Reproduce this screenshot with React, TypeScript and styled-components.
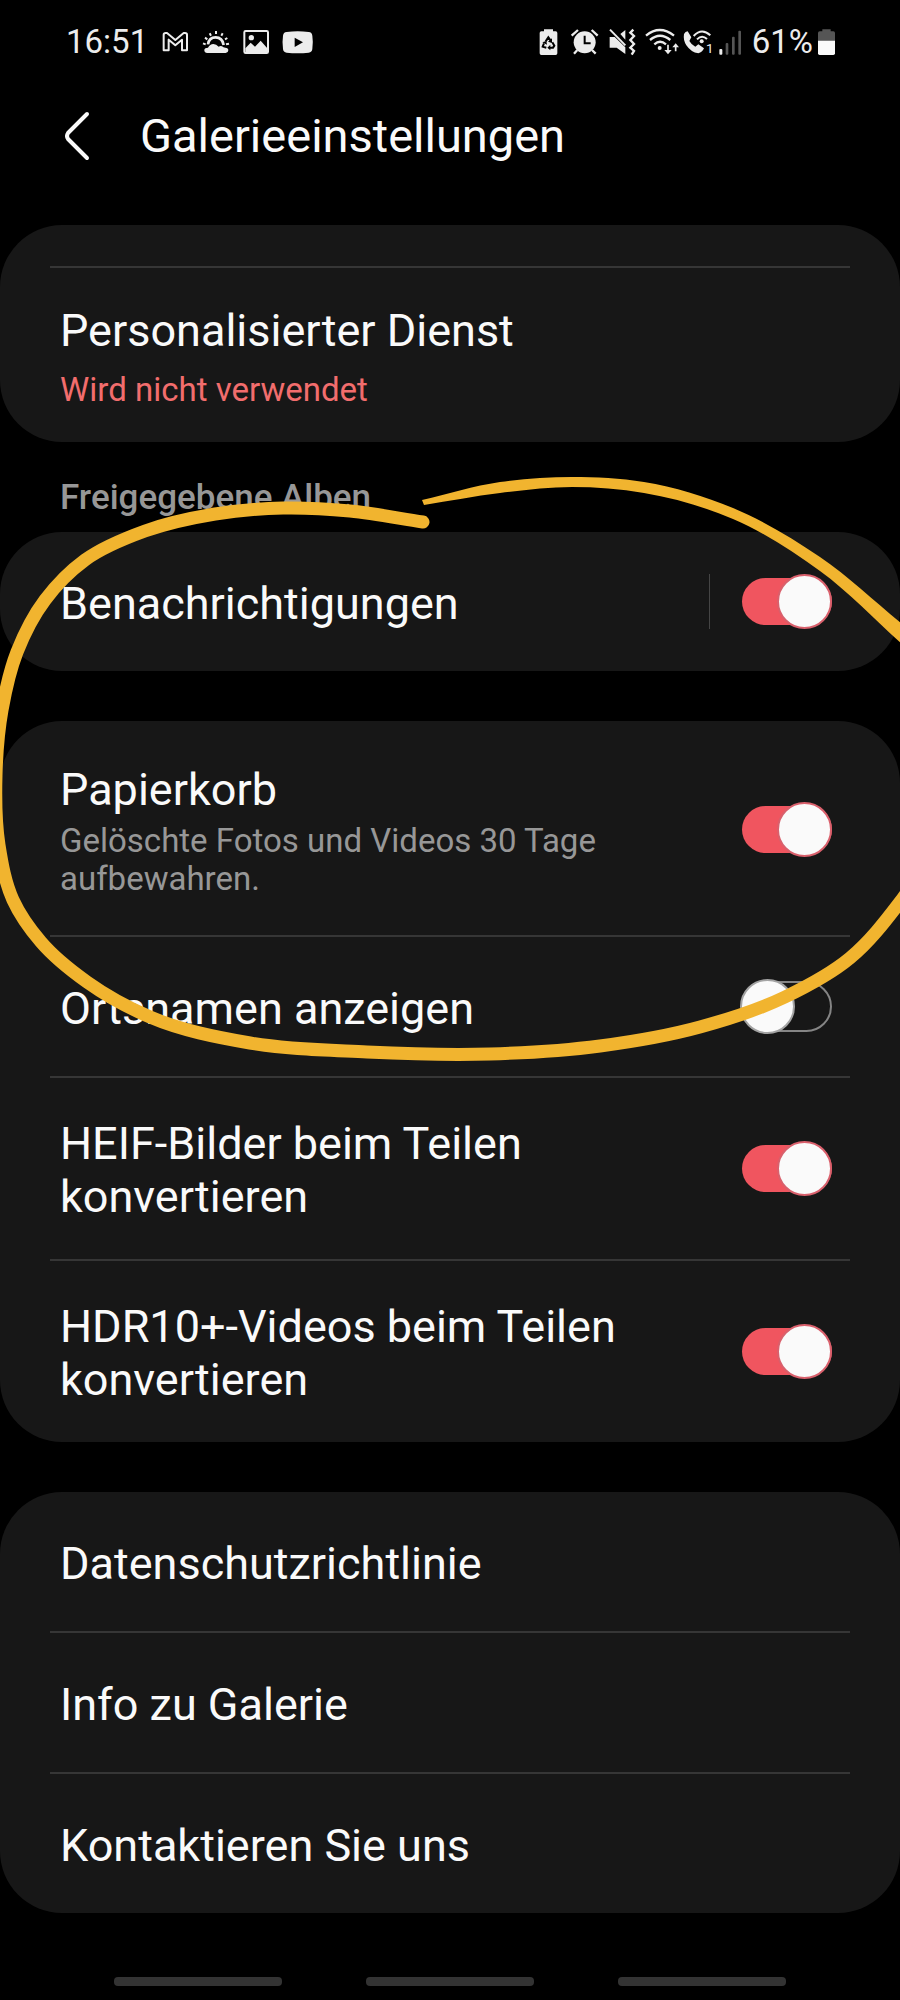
import React, { useId, useState } from "react";
import styled, { createGlobalStyle } from "styled-components";

const GlobalStyle = createGlobalStyle`
  *, *::before, *::after { box-sizing: border-box; }
  body {
    margin: 0;
    background: #000;
    color: #fafafa;
    font-family: Roboto, "Liberation Sans", sans-serif;
  }
  button { font: inherit; color: inherit; background: none; border: 0; padding: 0; }
`;

const Page = styled.div`
  position: relative;
  min-height: 100vh;
  display: flex;
  flex-direction: column;
  overflow: hidden;
`;

const StatusBar = styled.div`
  display: flex;
  justify-content: space-between;
  align-items: center;
  height: 84px;
  padding: 0 61px 0 66px;
  color: #ececec;
  font-size: 33px;
  line-height: 40px;
`;

const StatusGroup = styled.div`
  display: flex;
  align-items: center;
`;

const Clock = styled.span`
  margin-right: 7px;
`;

const Percent = styled.span`
  margin-left: 5px;
`;

const Glyph = styled.svg`
  display: block;
  flex: none;
  height: 30px;
`;

const Header = styled.header`
  display: flex;
  align-items: center;
  height: 141px;
  padding: 0 60px 38px 57px;
`;

const BackButton = styled.button`
  display: flex;
  justify-content: center;
  width: 40px;
  margin-right: 43px;
`;

const Title = styled.h1`
  margin: 0;
  font-size: 47px;
  line-height: 56px;
  font-weight: 400;
`;

const Card = styled.section<{ $clipped?: boolean }>`
  margin-top: ${(p) => (p.$clipped ? 0 : 50)}px;
  padding-top: ${(p) => (p.$clipped ? 41 : 0)}px;
  border-radius: 62px;
  background: #171717;
`;

const GroupHeading = styled.h2`
  margin: 0 60px -50px;
  padding: 36px 0 14px;
  font-size: 35px;
  line-height: 40px;
  font-weight: 500;
  color: #979797;
`;

const Divider = styled.hr`
  height: 2px;
  margin: 0 50px;
  border: 0;
  background: #363636;
`;

const rowPadding = {
  plain: "36px 68px 36px 60px",
  summary: "39px 68px 37px 60px",
  status: "33px 68px 33px 60px",
};

const RowBase = styled.div<{ $kind?: keyof typeof rowPadding }>`
  && {
    display: flex;
    align-items: center;
    width: 100%;
    min-height: 139px;
    padding: ${(p) => rowPadding[p.$kind ?? "plain"]};
    text-align: left;
  }
`;

const RowText = styled.div<{ $gap?: number }>`
  flex: 1;
  display: flex;
  flex-direction: column;
  gap: ${(p) => p.$gap ?? 6}px;
  padding: 3px 80px 0 0;
`;

const RowTitle = styled.span`
  font-size: 45px;
  line-height: 53px;
`;

const Summary = styled.span<{ $accent?: boolean }>`
  font-size: 33px;
  line-height: 38px;
  color: ${(p) => (p.$accent ? "#f26d6d" : "#979797")};
`;

const SwitchDivider = styled.span`
  width: 1px;
  height: 55px;
  margin-right: 30px;
  background: #454545;
`;

const Switch = styled.input`
  appearance: none;
  position: relative;
  flex: none;
  width: 92px;
  height: 55px;
  margin: 0;

  &::before {
    content: "";
    position: absolute;
    top: 2px;
    bottom: 2px;
    left: 2px;
    right: 0;
    border: 2px solid #858585;
    border-radius: 26px;
  }
  &::after {
    content: "";
    position: absolute;
    top: 0;
    left: 0;
    width: 55px;
    height: 55px;
    border: 2px solid #a3a3a3;
    border-radius: 50%;
    background: #fafafa;
  }
  &:checked::before {
    top: 4px;
    bottom: 4px;
    border: 0;
    background: #f0555f;
  }
  &:checked::after {
    left: auto;
    right: 0;
    border-color: #d9606c;
  }
`;

const NavBar = styled.nav`
  display: flex;
  gap: 84px;
  margin-top: auto;
  padding: 62px 114px 14px;
`;

const NavHandle = styled.button`
  flex: 1;
  height: 9px;
  border-radius: 4px;
  background: #333;
`;

const Annotation = styled.svg`
  position: absolute;
  top: 470px;
  left: 0;
  width: 100%;
  height: 600px;
  pointer-events: none;
`;

type Point = [number, number];

/* Unit tangent at point i, taken from its neighbours weighted by distance. */
function tangent(points: Point[], i: number): Point {
  const a = points[Math.max(i - 1, 0)];
  const p = points[i];
  const b = points[Math.min(i + 1, points.length - 1)];
  const before = Math.hypot(p[0] - a[0], p[1] - a[1]) || 1;
  const after = Math.hypot(b[0] - p[0], b[1] - p[1]) || 1;
  const x = ((p[0] - a[0]) / before) * after + ((b[0] - p[0]) / after) * before;
  const y = ((p[1] - a[1]) / before) * after + ((b[1] - p[1]) / after) * before;
  const length = Math.hypot(x, y) || 1;
  return [x / length, y / length];
}

/* Smooth cubic curve through the given points. */
function curve(points: Point[], start = "M"): string {
  let d = `${start}${points[0].join(" ")}`;
  for (let i = 0; i < points.length - 1; i++) {
    const p = points[i];
    const q = points[i + 1];
    const reach = Math.hypot(q[0] - p[0], q[1] - p[1]) / 3;
    const t = tangent(points, i);
    const u = tangent(points, i + 1);
    d += `C${p[0] + t[0] * reach} ${p[1] + t[1] * reach} ${q[0] - u[0] * reach} ${q[1] - u[1] * reach} ${q.join(" ")}`;
  }
  return d;
}

const strokeTop: Point[] = [
  [422, 500], [500, 482], [572, 477], [644, 482], [733, 508], [820, 557],
  [902, 624],
];
const strokeBottom: Point[] = [
  [902, 644], [820, 571], [733, 519], [644, 493], [572, 487], [500, 493],
  [424, 505],
];
const loop: Point[] = [
  [423, 522], [350, 511], [283, 508], [215, 514], [145, 531], [85, 560],
  [45, 600], [17, 652], [2, 710], [-4, 775], [-1, 845], [13, 900],
  [41, 942], [87, 982], [150, 1017], [250, 1043], [367, 1052], [490, 1054],
  [600, 1046], [700, 1027], [785, 997], [850, 958], [900, 902], [945, 830],
];

function HandDrawnCircle() {
  return (
    <Annotation viewBox="0 470 900 600" preserveAspectRatio="none" aria-hidden="true">
      <path d={`${curve(strokeTop)}${curve(strokeBottom, "L")}Z`} fill="#f1b42f" />
      <path d={curve(loop)} fill="none" stroke="#f1b42f" strokeWidth="13" strokeLinecap="round" />
    </Annotation>
  );
}

function NotificationIcons() {
  return (
    <>
      <Glyph width="40" viewBox="315 45 120 90" fill="none" stroke="currentColor" strokeWidth="6" strokeLinejoin="round">
        <path d="M341 115V68Q341 63 347 63H351L376 84L401 63H405Q411 63 411 68V115H396V83L376 100L356 83V115Z" />
      </Glyph>
      <Glyph width="40" viewBox="435 45 120 90" fill="currentColor">
        <path d="M472 123Q462 122 463 113Q464 107 474 107Q480 96 490 96Q499 96 506 104Q511 101 516 103Q520 107 526 107Q535 107 535 115Q535 122 527 123Z" />
        <path d="M474 97Q477 76 497 76Q517 76 521 99" fill="none" stroke="currentColor" strokeWidth="8" />
        <g stroke="currentColor" strokeWidth="6">
          <path d="M459 94L467 97M465 77L472 82M479 64L483 71M498 57V66M518 64L514 71M532 78L525 82M537 95L528 97" />
        </g>
      </Glyph>
      <Glyph width="41" viewBox="557 45 123 90" fill="none" stroke="currentColor">
        <rect x="585" y="57" width="71" height="66" rx="4" strokeWidth="6" />
        <circle cx="606" cy="77" r="8" fill="currentColor" stroke="none" />
        <path d="M588 121V109L604 92L617 104L634 86L654 109V121Z" fill="currentColor" stroke="none" />
      </Glyph>
      <Glyph width="43" viewBox="678 45 129 90" fill="currentColor">
        <path
          fillRule="evenodd"
          d="M710 60Q743 56 776 60Q786 61 787 71Q790 91 787 111Q786 121 776 122Q743 125 710 122Q700 121 699 111Q696 91 699 71Q700 61 710 60ZM734 77V105L759 91Z"
        />
      </Glyph>
    </>
  );
}

function SystemIcons() {
  return (
    <>
      <Glyph width="30" viewBox="43 45 90 90" fill="currentColor">
        <path d="M70 52H97V58H105Q110 58 110 63V124Q110 129 105 129H62Q57 129 57 124V63Q57 58 62 58H70Z" />
        <g stroke="#000" strokeWidth="6" fill="none">
          <path d="M75 88L83 76L90 86M70 94L66 104L77 107M95 91L101 101L97 107H86" />
        </g>
        <path d="M94 79L94 93L82 89ZM65 91L77 87L79 98ZM89 98V115L80 107Z" fill="#000" />
      </Glyph>
      <Glyph width="40" viewBox="133 45 120 90" fill="currentColor">
        <circle cx="192" cy="91" r="33" />
        <g stroke="currentColor" strokeWidth="7">
          <path d="M153 71L172 54M231 71L213 54M170 114L160 125M214 114L225 125" />
        </g>
        <path d="M192 71V94H210" fill="none" stroke="#000" strokeWidth="6" />
      </Glyph>
      <Glyph width="36" viewBox="253 45 108 90" fill="currentColor">
        <path d="M267 75H282L314 106V126L288 107H267ZM299 66L314 54V83Z" />
        <path d="M268 53L314 100" stroke="currentColor" strokeWidth="6" />
        <path d="M338 53L329 62L340 72L329 84L340 96L329 107L340 117L333 128" fill="none" stroke="currentColor" strokeWidth="7" />
      </Glyph>
      <Glyph width="42" viewBox="361 45 126 90" fill="none" stroke="currentColor" strokeWidth="7">
        <path d="M376 71Q417 37 460 71M388 84Q418 58 449 84M401 97Q418 82 436 97" />
        <circle cx="417" cy="108" r="6" fill="currentColor" stroke="none" />
        <path d="M442 98V118M465 118V102" strokeWidth="5" />
        <path d="M431 114H453L442 127ZM455 106H475L465 94Z" fill="currentColor" stroke="none" />
      </Glyph>
      <Glyph width="33" viewBox="487 45 99 90" fill="currentColor">
        <path d="M490 66Q494 59 501 58L512 76L506 87Q512 98 524 104L533 97L550 109Q545 121 533 124Q511 121 497 100Q487 84 490 66Z" />
        <path d="M519 72Q543 46 569 70M529 82Q544 67 559 81" fill="none" stroke="currentColor" strokeWidth="6" />
        <circle cx="543" cy="88" r="6" />
        <text x="556" y="123" fontSize="40">1</text>
      </Glyph>
      <Glyph width="31" viewBox="586 45 93 90" fill="#555">
        <rect x="596" y="111" width="9" height="17" rx="3" fill="#ececec" />
        <rect x="615" y="93" width="8" height="35" rx="3" />
        <rect x="634" y="74" width="8" height="54" rx="3" />
        <rect x="653" y="56" width="8" height="72" rx="3" />
      </Glyph>
    </>
  );
}

function BatteryIcon() {
  return (
    <Glyph width="26" viewBox="877 45 78 90">
      <path d="M905 52H930V58H938Q943 58 943 63V88H892V63Q892 58 897 58H905Z" fill="#555" />
      <path d="M892 86H943V124Q943 129 938 129H897Q892 129 892 124Z" fill="#fafafa" />
    </Glyph>
  );
}

interface SwitchRowProps {
  title: string;
  summary?: string;
  checked?: boolean;
  separated?: boolean;
}

function SwitchRow({ title, summary, checked = false, separated }: SwitchRowProps) {
  const [on, setOn] = useState(checked);
  const id = useId();
  return (
    <RowBase as="label" htmlFor={id} $kind={summary ? "summary" : "plain"}>
      <RowText>
        <RowTitle>{title}</RowTitle>
        {summary && <Summary>{summary}</Summary>}
      </RowText>
      {separated && <SwitchDivider />}
      <Switch id={id} type="checkbox" role="switch" checked={on} onChange={() => setOn(!on)} />
    </RowBase>
  );
}

function LinkRow({ title, status }: { title: string; status?: string }) {
  return (
    <RowBase as="button" type="button" $kind={status ? "status" : "plain"}>
      <RowText $gap={14}>
        <RowTitle>{title}</RowTitle>
        {status && <Summary $accent>{status}</Summary>}
      </RowText>
    </RowBase>
  );
}

export default function App() {
  return (
    <>
      <GlobalStyle />
      <Page>
        <StatusBar>
          <StatusGroup>
            <Clock>16:51</Clock>
            <NotificationIcons />
          </StatusGroup>
          <StatusGroup>
            <SystemIcons />
            <Percent>61%</Percent>
            <BatteryIcon />
          </StatusGroup>
        </StatusBar>

        <Header>
          <BackButton type="button" aria-label="Zurück">
            <svg width="28" height="50" viewBox="0 0 28 50" fill="none" stroke="#fafafa" strokeWidth="4" strokeLinecap="round" strokeLinejoin="round">
              <path d="M24 3L5 22Q3 25 5 28L24 47" />
            </svg>
          </BackButton>
          <Title>Galerieeinstellungen</Title>
        </Header>

        <main>
          <Card $clipped>
            <Divider />
            <LinkRow title="Personalisierter Dienst" status="Wird nicht verwendet" />
          </Card>

          <GroupHeading>Freigegebene Alben</GroupHeading>
          <Card>
            <SwitchRow title="Benachrichtigungen" checked separated />
          </Card>

          <Card>
            <SwitchRow title="Papierkorb" summary="Gelöschte Fotos und Videos 30 Tage aufbewahren." checked />
            <Divider />
            <SwitchRow title="Ortsnamen anzeigen" />
            <Divider />
            <SwitchRow title="HEIF-Bilder beim Teilen konvertieren" checked />
            <Divider />
            <SwitchRow title="HDR10+-Videos beim Teilen konvertieren" checked />
          </Card>

          <Card>
            <LinkRow title="Datenschutzrichtlinie" />
            <Divider />
            <LinkRow title="Info zu Galerie" />
            <Divider />
            <LinkRow title="Kontaktieren Sie uns" />
          </Card>
        </main>

        <NavBar aria-label="Systemnavigation">
          <NavHandle type="button" aria-label="Letzte Apps" />
          <NavHandle type="button" aria-label="Startseite" />
          <NavHandle type="button" aria-label="Zurück" />
        </NavBar>
        <HandDrawnCircle />
      </Page>
    </>
  );
}
